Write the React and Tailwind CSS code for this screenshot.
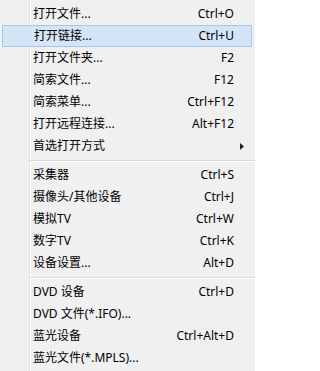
import React from "react";

const groups = [
  [
    { label: "打开文件...", key: "Ctrl+O" },
    { label: "打开链接...", key: "Ctrl+U", active: true },
    { label: "打开文件夹...", key: "F2" },
    { label: "简索文件...", key: "F12" },
    { label: "简索菜单...", key: "Ctrl+F12" },
    { label: "打开远程连接...", key: "Alt+F12" },
    { label: "首选打开方式", sub: true },
  ],
  [
    { label: "采集器", key: "Ctrl+S" },
    { label: "摄像头/其他设备", key: "Ctrl+J" },
    { label: "模拟TV", key: "Ctrl+W" },
    { label: "数字TV", key: "Ctrl+K" },
    { label: "设备设置...", key: "Alt+D" },
  ],
  [
    { label: "DVD 设备", key: "Ctrl+D" },
    { label: "DVD 文件(*.IFO)..." },
    { label: "蓝光设备", key: "Ctrl+Alt+D" },
    { label: "蓝光文件(*.MPLS)..." },
  ],
];

const MenuItem = ({ item }) => {
  if (item.active) {
    return (
      <div className="h-[22px] ml-[2px] mr-[3px] flex items-center justify-between pl-[31px] pr-[17px] bg-[#d3e5f7] border border-[#a3c6ea]">
        <span>{item.label}</span>
        <span>{item.key}</span>
      </div>
    );
  }

  return (
    <div className="h-[22px] flex items-center justify-between pl-[33px] pr-[21px]">
      <span>{item.label}</span>
      {item.sub ? (
        <svg width="4" height="7" viewBox="0 0 4 7" className="mr-[-10px]">
          <path d="M0 0 L4 3.5 L0 7 Z" fill="#222" />
        </svg>
      ) : (
        <span>{item.key}</span>
      )}
    </div>
  );
};

const App = () => {
  return (
    <div
      className="relative w-[255px] h-[371px] bg-[#f0f0f0] pt-[3px] text-[12px] text-black overflow-hidden"
      style={{ fontFamily: '"Noto Sans", "Noto Sans CJK SC", sans-serif' }}
    >
      {/* gutter line */}
      <div className="absolute left-[29px] top-0 bottom-0 w-px bg-[#e2e2e2]" />
      <div className="absolute left-[30px] top-0 bottom-0 w-px bg-white" />

      <div className="relative">
        {groups.map((group, i) => (
          <div key={i}>
            {i > 0 && (
              <div className="h-[7px] flex flex-col justify-center pl-[30px]">
                <div className="h-px bg-[#d7d7d7]" />
                <div className="h-px bg-white" />
              </div>
            )}
            {group.map((item) => (
              <MenuItem key={item.label} item={item} />
            ))}
          </div>
        ))}
      </div>
    </div>
  );
};

export default App;
